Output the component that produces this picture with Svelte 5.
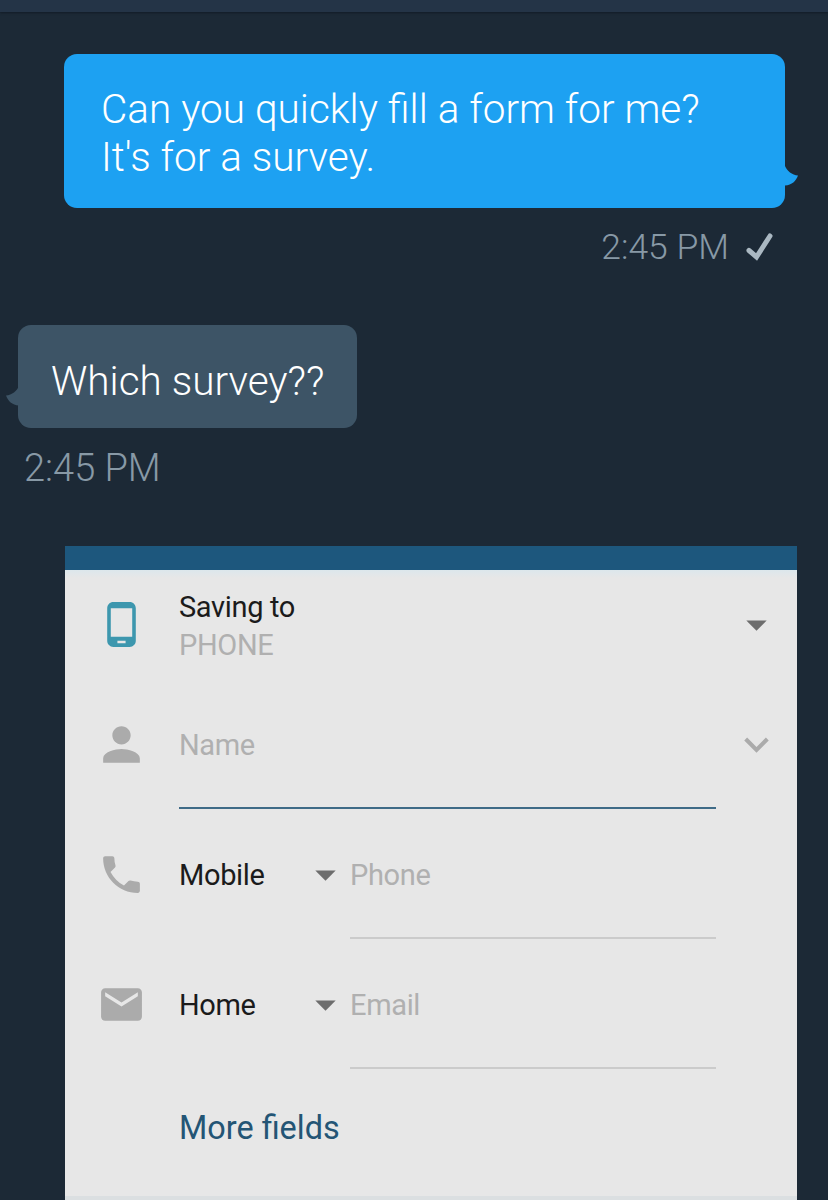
<script lang="ts">
	interface Field {
		icon: 'call' | 'email';
		label: string;
		placeholder: string;
	}

	const fields: Field[] = [
		{ icon: 'call', label: 'Mobile', placeholder: 'Phone' },
		{ icon: 'email', label: 'Home', placeholder: 'Email' }
	];

	const icons = {
		device:
			'M16 1H8C6.34 1 5 2.34 5 4v16c0 1.66 1.34 3 3 3h8c1.66 0 3-1.34 3-3V4c0-1.66-1.34-3-3-3zm-2 20.200h-4v-1.200h4v1.200zm3.250-3.200H6.750V4h10.500v14z',
		person:
			'M12 12c2.21 0 4-1.79 4-4s-1.79-4-4-4-4 1.79-4 4 1.79 4 4 4zm0 2c-2.67 0-8 1.34-8 4v2h16v-2c0-2.66-5.33-4-8-4z',
		call: 'M6.62 10.79c1.44 2.83 3.76 5.14 6.59 6.59l2.2-2.2c.27-.27.67-.36 1.02-.24 1.12.37 2.33.57 3.57.57.55 0 1 .45 1 1V20c0 .55-.45 1-1 1-9.39 0-17-7.61-17-17 0-.55.45-1 1-1h3.5c.55 0 1 .45 1 1 0 1.25.2 2.45.57 3.57.11.35.03.74-.25 1.02l-2.2 2.2z',
		email:
			'M20 4H4c-1.1 0-1.99.9-1.99 2L2 18c0 1.1.9 2 2 2h16c1.1 0 2-.9 2-2V6c0-1.1-.9-2-2-2zm0 4l-8 5-8-5V6l8 5 8-5v2z',
		dropdown: 'M7 10l5 5 5-5z',
		expand: 'M16.59 8.59L12 13.17 7.41 8.59 6 10l6 6 6-6z'
	};
</script>

{#snippet icon(name: keyof typeof icons)}
	<svg class="icon {name}" viewBox="0 0 24 24" aria-hidden="true">
		<path d={icons[name]} />
	</svg>
{/snippet}

<div class="screen">
	<header class="app-bar"></header>

	<main class="thread">
		<div class="bubble sent">
			<p>Can you quickly fill a form for me?<br />It's for a survey.</p>
			<svg class="tail" viewBox="0 0 13 20" aria-hidden="true">
				<path d="M0 0C2 5 7 9 13 9.500C11 15 7 19 0 19.500Z" />
			</svg>
		</div>
		<div class="meta sent-meta">
			<span>2:45 PM</span>
			<svg class="check" viewBox="0 0 28 28" aria-hidden="true">
				<path d="M3 17.500L10.500 24L24 3" />
			</svg>
		</div>

		<div class="bubble received">
			<p>Which survey??</p>
			<svg class="tail" viewBox="0 0 13 20" aria-hidden="true">
				<path d="M13 0C11 5 6 9 0 9.500C2 15 6 19 13 19.500Z" />
			</svg>
		</div>
		<div class="meta received-meta"><span>2:45 PM</span></div>

		<section class="card">
			<div class="card-bar"></div>

			<div class="row account">
				<div class="lead">{@render icon('device')}</div>
				<div class="account-text">
					<span class="label">Saving to</span>
					<span class="hint">PHONE</span>
				</div>
				<div class="end">{@render icon('dropdown')}</div>
			</div>

			<div class="row">
				<div class="lead">{@render icon('person')}</div>
				<div class="input focused"><span class="hint">Name</span></div>
				<div class="end">{@render icon('expand')}</div>
			</div>

			{#each fields as field}
				<div class="row">
					<div class="lead">{@render icon(field.icon)}</div>
					<div class="split">
						<div class="select">
							<span class="label">{field.label}</span>
							{@render icon('dropdown')}
						</div>
						<div class="input"><span class="hint">{field.placeholder}</span></div>
					</div>
				</div>
			{/each}

			<div class="more">More fields</div>
			<div class="card-edge"></div>
		</section>
	</main>
</div>

<style>
	:global(body) {
		margin: 0;
		background: #1c2936;
	}

	.screen {
		display: flex;
		flex-direction: column;
		width: 828px;
		height: 1200px;
		overflow: hidden;
		background: #1c2936;
		font-family: Roboto, 'Liberation Sans', sans-serif;
		font-weight: 300;
	}

	.app-bar {
		flex: none;
		height: 12px;
		background: #243447;
		box-shadow: 0 1px 2px #121b27;
	}

	.thread {
		display: flex;
		flex-direction: column;
		padding-top: 42px;
	}

	.bubble {
		position: relative;
		box-sizing: border-box;
		border-radius: 13px;
		color: #fff;
		font-size: 40.5px;
		line-height: 48px;
	}

	.bubble p {
		margin: 0;
		white-space: nowrap;
	}

	.sent {
		width: 721px;
		height: 154px;
		margin-left: 64px;
		padding: 31px 37px;
		background: #1da1f2;
	}

	.received {
		width: 339px;
		height: 103px;
		margin: 58px 0 0 18px;
		padding: 32px 33px;
		background: #3d5466;
	}

	.tail {
		position: absolute;
		width: 13px;
		height: 20px;
	}

	.sent .tail {
		right: -12.5px;
		bottom: 22.5px;
		fill: #1da1f2;
	}

	.received .tail {
		left: -12.5px;
		bottom: 22.5px;
		fill: #3d5466;
	}

	.meta {
		display: flex;
		align-items: center;
		color: #8899a6;
	}

	.sent-meta {
		justify-content: flex-end;
		gap: 17px;
		height: 42px;
		margin-top: 17px;
		padding: 2px 54px 0 0;
		box-sizing: border-box;
		font-size: 35.5px;
	}

	.received-meta {
		height: 44px;
		margin-top: 18px;
		padding-left: 24px;
		font-size: 38px;
	}

	.check {
		width: 28px;
		height: 28px;
		fill: none;
		stroke: #aab8c2;
		stroke-width: 5;
		stroke-linecap: round;
	}

	.card {
		display: flex;
		flex-direction: column;
		width: 732px;
		height: 654px;
		margin: 56px 0 0 65px;
		background: #e7e7e7;
		font-size: 29px;
		font-weight: 400;
		letter-spacing: -0.35px;
		line-height: 38px;
	}

	.card-bar {
		height: 24px;
		background: #1d577d;
	}

	.row {
		display: grid;
		grid-template-columns: 114px 537px 81px;
		height: 130px;
	}

	.account {
		height: 109px;
		background: linear-gradient(#dce7ec, #e7e7e7 8px);
	}

	.lead,
	.end {
		display: flex;
		align-items: center;
		justify-content: center;
	}

	.lead {
		padding-right: 1px;
	}

	.icon {
		width: 49px;
		height: 49px;
		fill: #ababab;
	}

	.icon.device {
		fill: #3d97ae;
	}

	.icon.person {
		width: 55px;
		height: 55px;
	}

	.icon.dropdown {
		fill: #6d6d6d;
	}

	.account-text {
		display: flex;
		flex-direction: column;
		justify-content: center;
		padding-top: 2px;
	}

	.label {
		color: #1b1b1b;
	}

	.select .label {
		padding-top: 1px;
	}

	.hint {
		color: #b0b0b0;
	}

	.split {
		display: grid;
		grid-template-columns: 171px 366px;
	}

	.select {
		display: flex;
		align-items: center;
		justify-content: space-between;
	}

	.input {
		display: flex;
		align-items: center;
		box-sizing: border-box;
		padding-top: 3px;
		border-bottom: 2px solid #cbcbcb;
	}

	.input.focused {
		border-bottom-color: #3f6b87;
	}

	.more {
		flex: 1;
		padding: 40px 0 0 114px;
		color: #245575;
		font-size: 32.4px;
		letter-spacing: normal;
	}

	.card-edge {
		height: 4px;
		background: #dbdfe1;
	}
</style>
